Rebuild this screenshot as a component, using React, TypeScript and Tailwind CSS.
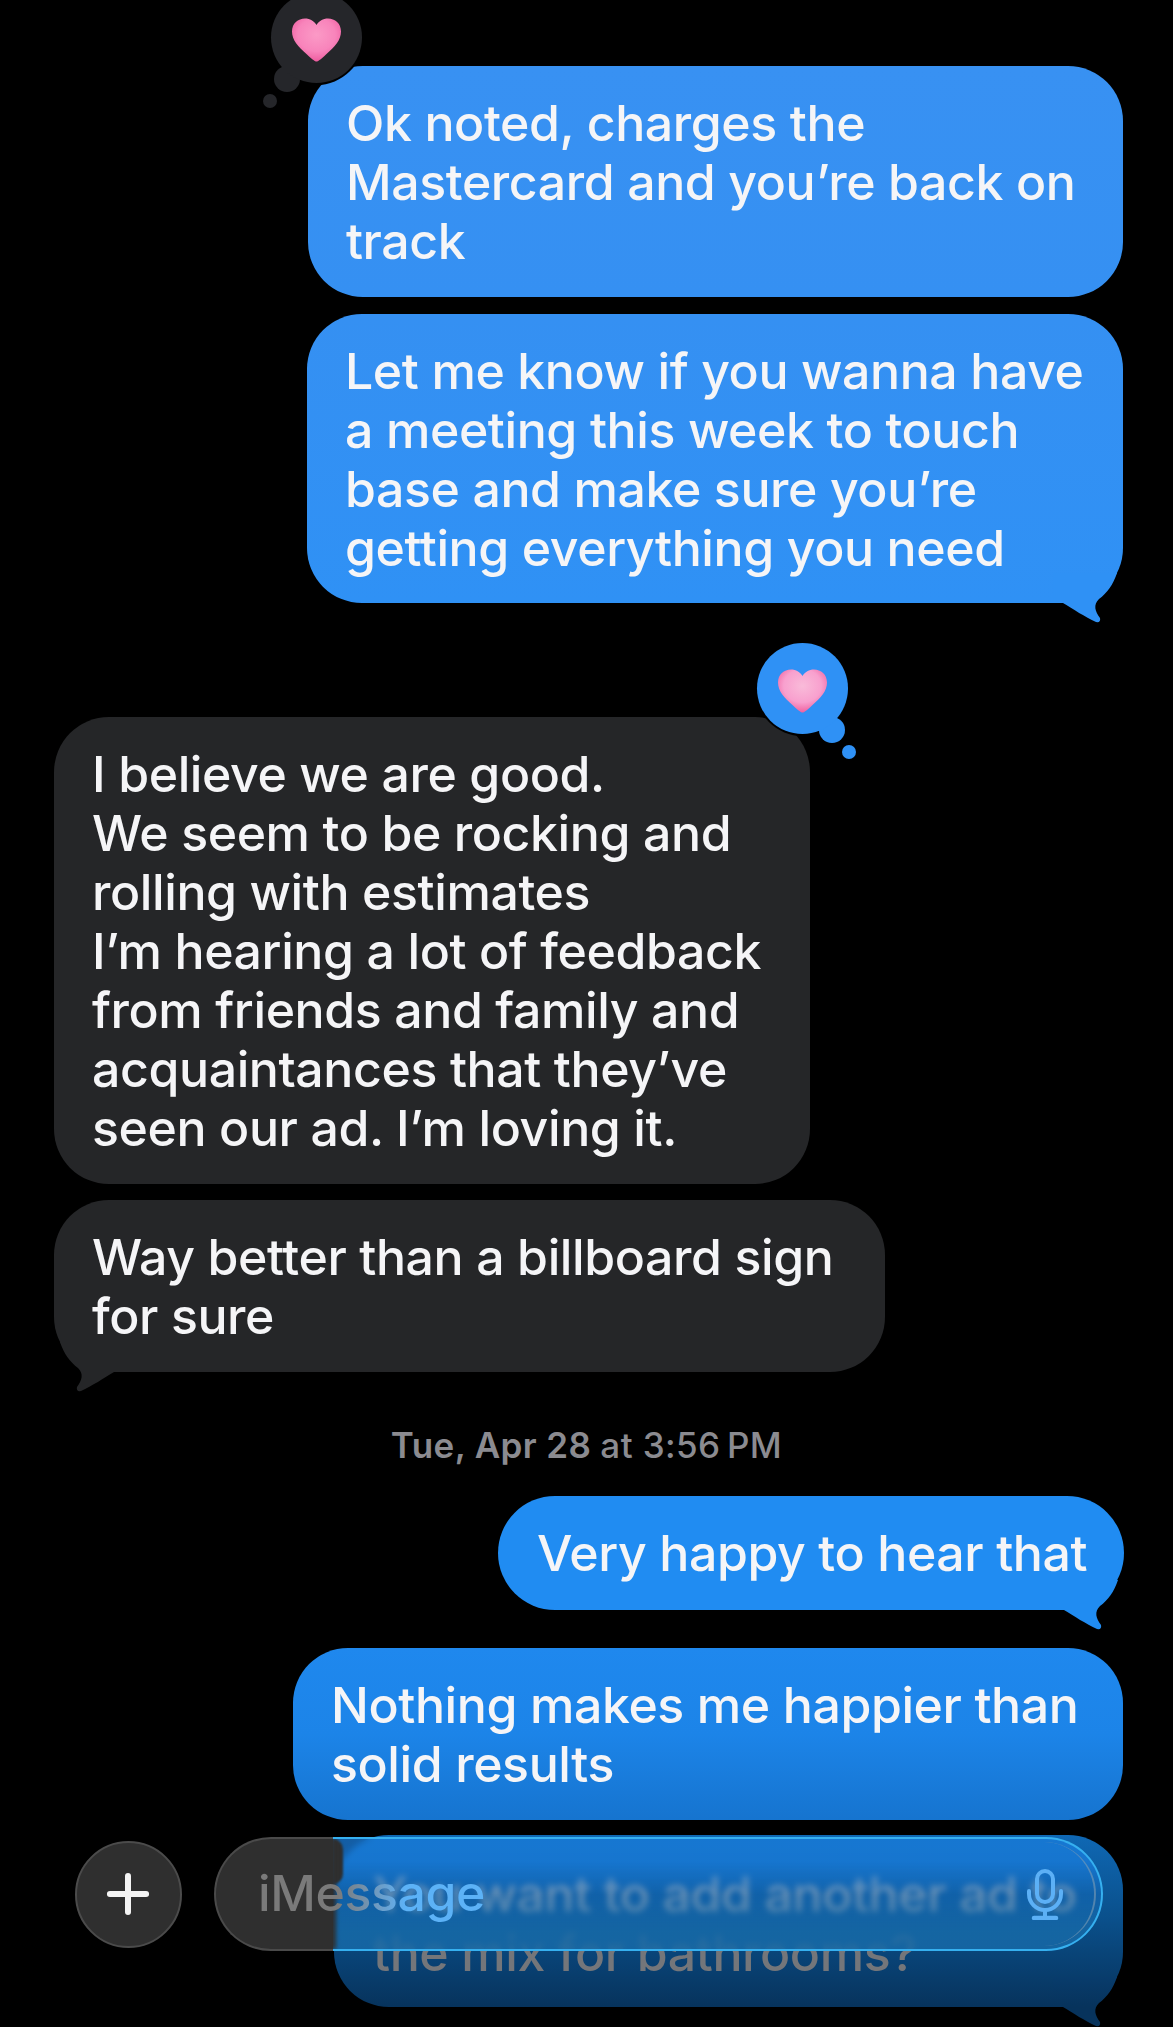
import React, { useId } from 'react';
import { Plus } from 'lucide-react';

const Tail: React.FC<{ top: string; bottom?: string; left?: boolean }> = ({ top, bottom, left }) => {
    const id = useId();
    return (
        <svg
            viewBox="0 0 70 50"
            className={`absolute bottom-[-20px] w-[70px] h-[50px] ${left ? 'left-0 -scale-x-100' : 'right-0'}`}
        >
            <defs>
                <linearGradient id={id} gradientUnits="userSpaceOnUse" x1="0" y1="0" x2="0" y2="30">
                    <stop offset="0%" stopColor={top} />
                    <stop offset="100%" stopColor={bottom ?? top} />
                </linearGradient>
            </defs>
            <path
                fill={`url(#${id})`}
                d="M0 30 L10 30 C20 36 32 44 43 49 Q48 50 47 45 C42 38 40 32 46 26 C54 20 60 12 64 0 L0 0 Z"
            />
        </svg>
    );
};

const Heart: React.FC<{ id: string; from: string; mid: string; to: string }> = ({ id, from, mid, to }) => (
    <svg viewBox="0 0 49 44" className="absolute left-[21px] top-[26px] w-[49px] h-[44px]">
        <defs>
            <radialGradient id={id} cx="50%" cy="38%" r="62%">
                <stop offset="0%" stopColor={from} />
                <stop offset="62%" stopColor={mid} />
                <stop offset="100%" stopColor={to} />
            </radialGradient>
        </defs>
        <path
            fill={`url(#${id})`}
            d="M24.5 43.5 C23 43.5 21 42 15 36.5 C6 28.5 0 22 0 13.5 C0 5.5 6 0.5 13 0.5 C18 0.5 22 3 24.5 7 C27 3 31 0.5 36 0.5 C43 0.5 49 5.5 49 13.5 C49 22 43 28.5 34 36.5 C28 42 26 43.5 24.5 43.5 Z"
        />
    </svg>
);

const Reaction: React.FC<{ className: string; color: string; children: React.ReactNode }> = ({ className, color, children }) => (
    <div className={`absolute w-[91px] h-[91px] ${className}`}>
        <div className="absolute -inset-[2px] rounded-full bg-black" />
        <div className={`absolute left-[62px] top-[74px] w-[26px] h-[26px] rounded-full ${color}`} />
        <div className={`absolute left-[85px] top-[102px] w-[14px] h-[14px] rounded-full ${color}`} />
        <div className={`absolute inset-0 rounded-full ${color}`} />
        {children}
    </div>
);

const Lines: React.FC<{ lines: string[] }> = ({ lines }) => (
    <>
        {lines.map((line) => (
            <div key={line} className="whitespace-nowrap">{line}</div>
        ))}
    </>
);

const MicIcon = () => (
    <svg viewBox="0 0 36 51" className="relative w-[36px] h-[51px] fill-none stroke-[#5cb0f6]" strokeWidth="4" strokeLinecap="round">
        <rect x="10" y="2" width="16" height="31" rx="8" />
        <path d="M2 22 V25 A16 16 0 0 0 34 25 V22" />
        <path d="M18 41 V48" />
        <path d="M7 49 H29" strokeWidth="4.5" />
    </svg>
);

const App: React.FC = () => {
    return (
        <div className="relative w-[1173px] h-[2027px] overflow-hidden bg-black text-[#f5f5f7] text-[50px] leading-[59px] font-['Inter',sans-serif] font-medium tracking-[-0.4px]">
            <div className="flex flex-col pt-[66px]">
                {/* first block, sent */}
                <div className="flex justify-end pr-[50px]">
                    <div className="relative w-[815px] rounded-[55px] pl-[38px] pt-[28px] pb-[26px] bg-linear-to-b from-[#3891f2] to-[#3590f2]">
                        <Lines lines={['Ok noted, charges the', 'Mastercard and you’re back on', 'track']} />
                        <Reaction className="-left-[37px] -top-[74px] -scale-x-100" color="bg-[#25262a]">
                            <Heart id="heart-a" from="#fb9ac6" mid="#f884bb" to="#ee5c9f" />
                        </Reaction>
                    </div>
                </div>
                <div className="flex justify-end pr-[50px] mt-[17px]">
                    <div className="relative w-[816px] rounded-[55px] pl-[38px] pt-[28px] pb-[25px] bg-linear-to-b from-[#3590f2] to-[#2f91f5]">
                        <Lines lines={['Let me know if you wanna have', 'a meeting this week to touch', 'base and make sure you’re', 'getting everything you need']} />
                        <Tail top="#2f91f5" />
                    </div>
                </div>

                {/* received */}
                <div className="flex pl-[54px] mt-[114px]">
                    <div className="relative w-[756px] rounded-[55px] pl-[38px] pt-[28px] pb-[26px] bg-[#252628]">
                        <Lines
                            lines={[
                                'I believe we are good.',
                                'We seem to be rocking and',
                                'rolling with estimates',
                                'I’m hearing a lot of feedback',
                                'from friends and family and',
                                'acquaintances that they’ve',
                                'seen our ad. I’m loving it.',
                            ]}
                        />
                        <Reaction className="left-[703px] -top-[74px]" color="bg-[#2f91f5]">
                            <Heart id="heart-b" from="#f9bbd9" mid="#f8a0ce" to="#f0609f" />
                        </Reaction>
                    </div>
                </div>
                <div className="flex pl-[54px] mt-[16px]">
                    <div className="relative w-[831px] rounded-[55px] pl-[38px] pt-[28px] pb-[26px] bg-[#252628]">
                        <Lines lines={['Way better than a billboard sign', 'for sure']} />
                        <Tail top="#252628" left />
                    </div>
                </div>

                <div className="mt-[53px] h-[40px] flex items-center justify-center text-[35px] leading-[40px] tracking-[0.4px] text-[#8b8b90] font-medium">
                    <span className="font-semibold">Tue, Apr 28</span>
                    <span className="ml-[9px]">at 3:56&#8201;PM</span>
                </div>

                <div className="flex justify-end pr-[49px] mt-[31px]">
                    <div className="relative w-[626px] rounded-[57px] pl-[39px] pt-[28px] pb-[27px] bg-[#208cf2]">
                        <Lines lines={['Very happy to hear that']} />
                        <Tail top="#208cf2" />
                    </div>
                </div>
                <div className="flex justify-end pr-[50px] mt-[38px]">
                    <div className="relative w-[830px] rounded-[55px] pl-[38px] pt-[28px] pb-[26px] bg-linear-to-b from-[#1f88ee] via-[#1c84e8] to-[#1674cf]">
                        <Lines lines={['Nothing makes me happier than', 'solid results']} />
                    </div>
                </div>
                <div className="flex justify-end pr-[50px] mt-[15px]">
                    <div className="relative w-[789px] h-[172px] rounded-[55px] pl-[39px] pt-[30px] bg-linear-to-b from-[#0f68b4] via-[#0a4f8a] to-[#07335c] text-[#74767a]">
                        <div className="text-[#c0b8b0]">You want to add another ad to</div>
                        <div>the mix for bathrooms?</div>
                        <Tail top="#083c6c" bottom="#07335c" />
                    </div>
                </div>
            </div>

            {/* input bar floats over the thread */}
            <div className="absolute left-[75px] bottom-[76px] w-[1028px] h-[114px] flex items-center">
                <div className="w-[107px] h-[107px] rounded-full bg-[#2f2f2f] border-2 border-[#4b4b4b] flex items-center justify-center shrink-0">
                    <Plus size={62} strokeWidth={2.32} className="text-[#f4f4f4] -ml-[2px]" />
                </div>
                <div className="relative ml-[32px] flex-1 h-[114px] flex">
                    <div className="w-[119px] h-full rounded-l-[57px] bg-[#2f2f2f] border-y-2 border-l-2 border-[#4a4a4a]" />
                    <div className="relative flex-1 h-full rounded-r-[57px] overflow-hidden backdrop-blur-[3px] bg-linear-to-b from-[#1a7ddc]/75 from-[20%] via-[#166cbc]/50 via-[50%] to-[#176aa8]/85 to-[85%] border-y-2 border-r-2 border-[#36b0f0] flex items-center justify-end pr-[38px]">
                        <div aria-hidden="true" className="absolute left-[38px] -top-[48px] text-[#5f8fbd] blur-[0.5px] whitespace-nowrap">
                            You want to add another ad to
                        </div>
                        <div className="absolute left-0 top-0 w-[10px] h-[45px] rounded-r-full bg-[#2f2f2f] blur-[1px]" />
                        <div className="absolute -left-[3px] top-0 w-[6px] h-full bg-[#2f2f2f] blur-[2px]" />
                        <div className="absolute right-[5px] top-[3px] bottom-[3px] w-[100px] rounded-r-[52px] border-r-2 border-[#7f9cb4]/60" />
                        <MicIcon />
                    </div>
                    <span className="absolute left-[44px] top-[27px] bg-clip-text text-transparent bg-linear-to-r from-[#7a7a7a] from-[35%] to-[#5cb2f7] to-[65%]">
                        iMessage
                    </span>
                </div>
            </div>
        </div>
    );
};

export default App;
